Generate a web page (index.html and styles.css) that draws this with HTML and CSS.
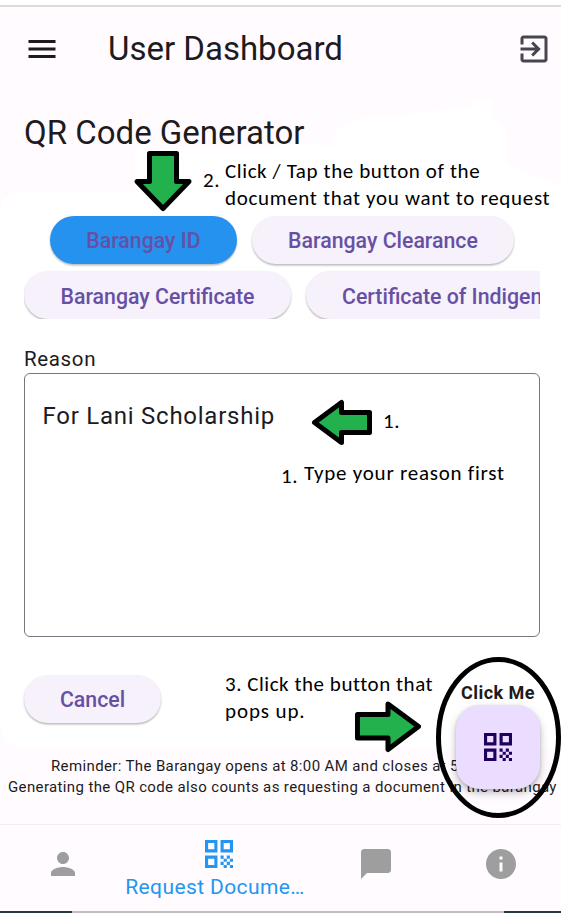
FILE: index.html
```html
<!DOCTYPE html>
<html lang="en">
<head>
<meta charset="utf-8">
<title>User Dashboard</title>
<link rel="stylesheet" href="styles.css">
</head>
<body>
<svg class="defs" width="0" height="0">
  <symbol id="qr" viewBox="3 3 18 18"><path d="M3 11h8V3H3v8zm2-6h4v4H5V5zM3 21h8v-8H3v8zm2-6h4v4H5v-4zM13 3v8h8V3h-8zm6 6h-4V5h4v4zM19 19h2v2h-2zM13 13h2v2h-2zM15 15h2v2h-2zM13 17h2v2h-2zM15 19h2v2h-2zM17 17h2v2h-2zM17 13h2v2h-2zM19 15h2v2h-2z"/></symbol>
</svg>
<div class="screen">
  <svg class="patch" width="561" height="913"><path d="M18 192H135V149H268Q280 143 305 143L333 147Q325 137 346 123Q360 117 385 117L420 112L440 110L465 108L480 99Q492 97 493 104L492 120Q506 121 506 135V162L535 177Q556 179 561 188V747H20Q0 742 0 720V210Q1 195 18 192Z"/></svg>
  <header class="appbar">
    <svg class="menu" width="36" height="36" viewBox="0 0 24 24"><path d="M3 18h18v-2H3v2zm0-5h18v-2H3v2zm0-7v2h18V6H3z"/></svg>
    <h1 class="title">User Dashboard</h1>
    <svg class="exit" width="36" height="36" viewBox="0 0 24 24"><path d="M10.09 15.59L11.5 17l5-5-5-5-1.41 1.41L12.67 11H3v2h9.67l-2.58 2.59zM19 3H5c-1.11 0-2 .9-2 2v4h2V5h14v14H5v-4H3v4c0 1.1.89 2 2 2h14c1.1 0 2-.9 2-2V5c0-1.1-.9-2-2-2z"/></svg>
  </header>
  <main class="content">
    <h2 class="heading">QR Code Generator</h2>
    <div class="choices">
      <div class="row first"><button class="pill active">Barangay ID</button><button class="pill clearance">Barangay Clearance</button></div>
      <div class="row"><button class="pill cert">Barangay Certificate</button><button class="pill indigency">Certificate of Indigency</button></div>
    </div>
    <label class="label">Reason</label>
    <div class="reason">For Lani Scholarship</div>
    <button class="pill cancel">Cancel</button>
  </main>
  <div class="reminder"><p class="rem1">Reminder: The Barangay opens at 8:00 AM and closes at 5:00 PM</p><p class="rem2">Generating the QR code also counts as requesting a document in the barangay</p></div>
  <nav class="nav">
    <div class="tab"><svg width="36" height="36" viewBox="0 0 24 24"><path d="M12 12c2.21 0 4-1.79 4-4s-1.79-4-4-4-4 1.79-4 4 1.79 4 4 4zm0 2c-2.67 0-8 1.34-8 4v2h16v-2c0-2.66-5.33-4-8-4z"/></svg></div>
    <div class="tab selected"><svg width="28" height="28"><use href="#qr"/></svg><span>Request Docume…</span></div>
    <div class="tab"><svg width="36" height="36" viewBox="0 0 24 24"><path d="M20 2H4c-1.1 0-2 .9-2 2v18l4-4h14c1.1 0 2-.9 2-2V4c0-1.1-.9-2-2-2z"/></svg></div>
    <div class="tab"><svg width="36" height="36" viewBox="0 0 24 24"><path d="M12 2C6.48 2 2 6.48 2 12s4.480 10 10 10 10-4.480 10-10S17.520 2 12 2zm1 15h-2v-6h2v6zm0-8h-2V7h2v2z"/></svg></div>
  </nav>
  <div class="homebar"></div>
  <div class="fab-label">Click Me</div>
  <div class="fab"><svg width="28" height="28"><use href="#qr"/></svg></div>
  <svg class="marks" width="567" height="913">
    <g class="arrow">
      <path d="M149.500 153.500H176.500V181.500H189L163 208.500L137 181.500H149.500Z"/>
      <path d="M314.500 422.500L341.500 402.500V412.500H369.500V432.500H341.500V442.500Z"/>
      <path d="M357.500 714.500H388V704L418.500 726.500L388 749.500V738H357.500Z"/>
    </g>
    <ellipse cx="498.500" cy="737.500" rx="60" ry="78"/>
  </svg>
  <div class="note n2">2.</div>
  <div class="note n2a">Click / Tap the button of the</div>
  <div class="note n2b">document that you want to request</div>
  <div class="note n1">1.</div>
  <div class="note n1a">1.</div>
  <div class="note n1b">Type your reason first</div>
  <div class="note n3a">3. Click the button that</div>
  <div class="note n3b">pops up.</div>
</div>
</body>
</html>
```
FILE: styles.css
```css
* { box-sizing: border-box; }
html, body { margin: 0; height: 913px; overflow: hidden; background: #fff; }
body { font-family: Roboto, sans-serif; color: #1d1b20; }
h1, h2, p { margin: 0; font-weight: 400; }
.defs { position: absolute; }
.screen { position: relative; width: 561px; height: 913px; display: flex; flex-direction: column; background: #fffbff; border-top: 5px solid #fff; white-space: nowrap; }
.patch { position: absolute; left: 0; top: -5px; fill: #fff; }
.appbar { position: relative; flex: none; display: flex; align-items: center; height: 89px; border-top: 2px solid #dcdcdc; padding: 0 9px 3px 24px; }
.title { flex: 1; margin-left: 48px; font-size: 33px; line-height: 40px; }
.exit { fill: #49454f; }
.menu { fill: #1d1b20; }
.content { position: relative; flex: none; display: flex; flex-direction: column; align-items: flex-start; padding: 19px 27px 0 24px; height: 659px; }
.heading { font-size: 33px; line-height: 40px; }
.choices { width: 516px; height: 103px; margin-top: 63px; overflow: hidden; display: flex; flex-direction: column; gap: 7px; }
.row { display: flex; gap: 15px; }
.first { padding-left: 26px; }
.pill { flex: none; height: 48px; border: 0; border-radius: 24px; padding: 1px 0 0; background: #f6f1fa; color: #6750a4; font: 500 21.300px/47px Roboto, sans-serif; box-shadow: 0 1.500px 2px rgba(0,0,0,.28); }
.active { width: 187px; background: #2592f0; }
.clearance { width: 262px; }
.cert { width: 267px; padding-top: 2px; }
.indigency { width: 308px; padding: 2px 0 0 36px; text-align: left; }
.label { margin-top: 28px; font-size: 20.500px; line-height: 24px; letter-spacing: .65px; }
.reason { width: 516px; height: 264px; margin-top: 2px; border: 1.500px solid #79747e; border-radius: 6px; padding: 27px 17.500px; font-size: 24px; line-height: 30px; letter-spacing: .75px; }
.cancel { width: 137px; margin-top: 38px; }
.reminder { position: relative; flex: none; height: 71px; padding-top: 3px; font-size: 15px; line-height: 21px; letter-spacing: .37px; }
.rem1 { padding-left: 51px; }
.rem2 { padding-left: 8px; }
.nav { position: relative; flex: none; display: grid; grid-template-columns: 126px 186px 127px 124px; height: 84px; padding-top: 3px; background: #fffbff; border-top: 1px solid #f1edf1; fill: #9e9e9e; }
.tab { display: flex; flex-direction: column; align-items: center; justify-content: center; height: 72px; }
.selected { justify-content: flex-start; padding-top: 12px; color: #2196f3; fill: #2196f3; }
.selected span { font-size: 21px; line-height: 26px; margin: 6px 8px 0 0; letter-spacing: .4px; }
.homebar { position: absolute; left: 0; top: 906px; width: 561px; height: 2px; background: linear-gradient(to right, #263940 72px, #c1bdc1 72px 504px, #263940 504px); }
.fab-label { position: absolute; left: 461px; top: 677px; font-size: 18px; line-height: 22px; font-weight: 700; letter-spacing: .45px; }
.fab { position: absolute; left: 456px; top: 700px; width: 84px; height: 84px; border-radius: 24px; background: #eaddff; fill: #21005d; display: flex; align-items: center; justify-content: center; box-shadow: 0 4px 8px rgba(0,0,0,.25), 0 1px 3px rgba(0,0,0,.15); }
.marks { position: absolute; left: 0; top: -5px; fill: none; stroke: #000; stroke-width: 5px; }
.arrow { fill: #22b14c; stroke-linejoin: round; }
.note { position: absolute; font: 21px/26px Carlito, "Open Sans", sans-serif; letter-spacing: .65px; color: #000; }
.n2 { left: 203px; top: 162px; }
.n2a { left: 225px; top: 153px; letter-spacing: .6px; }
.n2b { left: 225px; top: 180px; letter-spacing: .68px; }
.n1 { left: 383px; top: 403px; }
.n1a { left: 281px; top: 458px; }
.n1b { left: 304px; top: 455px; letter-spacing: .75px; }
.n3a { left: 225px; top: 666px; letter-spacing: .53px; }
.n3b { left: 225px; top: 693px; letter-spacing: .9px; }
```
